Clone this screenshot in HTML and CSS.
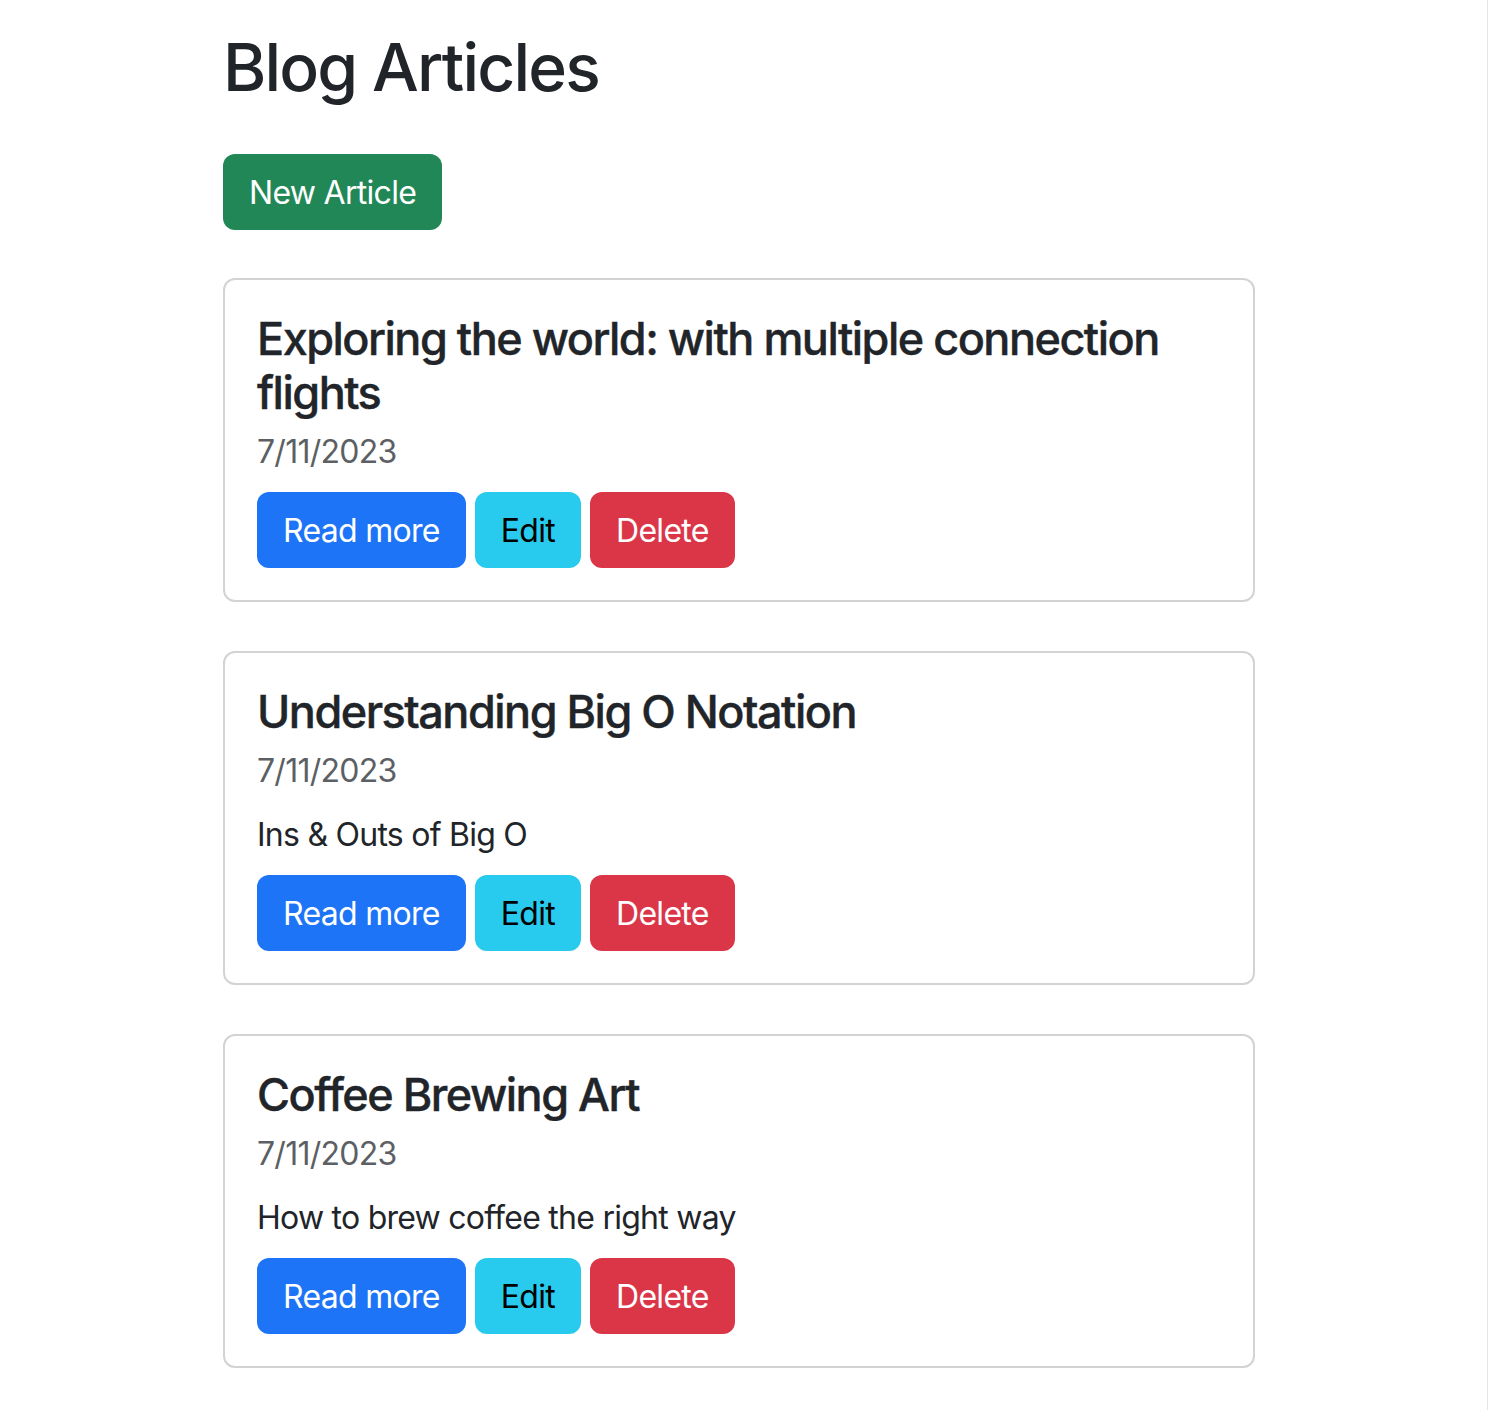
FILE: index.html
```html
<!DOCTYPE html>
<html lang="en">
<head>
<meta charset="utf-8">
<title>Blog Articles</title>
<link rel="stylesheet" href="styles.css">
</head>
<body>
<div class="page">
  <main class="container">
    <h1 class="page-title">Blog Articles</h1>
    <div class="toolbar">
      <a class="btn btn-success" href="#">New Article</a>
    </div>
    <div class="articles">
      <article class="card">
        <h4 class="card-title">Exploring the world: with multiple connection flights</h4>
        <div class="card-date">7/11/2023</div>
        <div class="actions">
          <a class="btn btn-primary" href="#">Read more</a>
          <a class="btn btn-info" href="#">Edit</a>
          <button class="btn btn-danger" type="button">Delete</button>
        </div>
      </article>
      <article class="card">
        <h4 class="card-title">Understanding Big O Notation</h4>
        <div class="card-date">7/11/2023</div>
        <p class="card-text">Ins &amp; Outs of Big O</p>
        <div class="actions">
          <a class="btn btn-primary" href="#">Read more</a>
          <a class="btn btn-info" href="#">Edit</a>
          <button class="btn btn-danger" type="button">Delete</button>
        </div>
      </article>
      <article class="card">
        <h4 class="card-title">Coffee Brewing Art</h4>
        <div class="card-date">7/11/2023</div>
        <p class="card-text">How to brew coffee the right way</p>
        <div class="actions">
          <a class="btn btn-primary" href="#">Read more</a>
          <a class="btn btn-info" href="#">Edit</a>
          <button class="btn btn-danger" type="button">Delete</button>
        </div>
      </article>
    </div>
  </main>
</div>
</body>
</html>
```

FILE: styles.css
```css
html, body {
  margin: 0;
  padding: 0;
  background: #ffffff;
}

body {
  font-family: Inter, "Liberation Sans", sans-serif;
  color: #212529;
  font-size: 32px;
  line-height: 1.5;
}

.page {
  width: 1488px;
  min-height: 1410px;
  box-sizing: border-box;
  border-right: 1px solid #e6e6e6;
}

.container {
  width: 1032px;
  margin-left: 223px;
  padding-top: 28px;
  padding-bottom: 40px;
}

.page-title {
  margin: 0 0 47px;
  font-size: 66px;
  font-weight: 500;
  line-height: 1.2;
  letter-spacing: -1.85px;
}

.toolbar {
  display: flex;
  margin-bottom: 48px;
}

.btn {
  display: inline-block;
  box-sizing: border-box;
  height: 76px;
  padding: 0 24px;
  border: 2px solid transparent;
  border-radius: 12px;
  font-family: inherit;
  font-size: 32px;
  font-weight: 400;
  line-height: 74px;
  text-decoration: none;
  cursor: pointer;
  letter-spacing: -0.7px;
}

.btn-success { background: #218756; color: #ffffff; }
.btn-primary { background: #1d74f7; color: #ffffff; }
.btn-info { background: #28cbed; color: #000000; }
.btn-danger { background: #db3648; color: #ffffff; }

.articles {
  display: flex;
  flex-direction: column;
  gap: 49px;
}

.card {
  border: 2px solid #d3d3d3;
  border-radius: 12px;
  padding: 32px;
}

.card-title {
  margin: 0 0 8px;
  font-size: 45px;
  font-weight: 500;
  line-height: 54px;
  letter-spacing: -1.5px;
  -webkit-text-stroke: 0.4px #212529;
}

.card-date {
  margin-bottom: 16px;
  color: #5c5f63;
  line-height: 48px;
  letter-spacing: -0.75px;
}

.card-text {
  margin: 0 0 16px;
  line-height: 48px;
  letter-spacing: -0.75px;
}

.actions {
  display: flex;
  gap: 9px;
}
```
